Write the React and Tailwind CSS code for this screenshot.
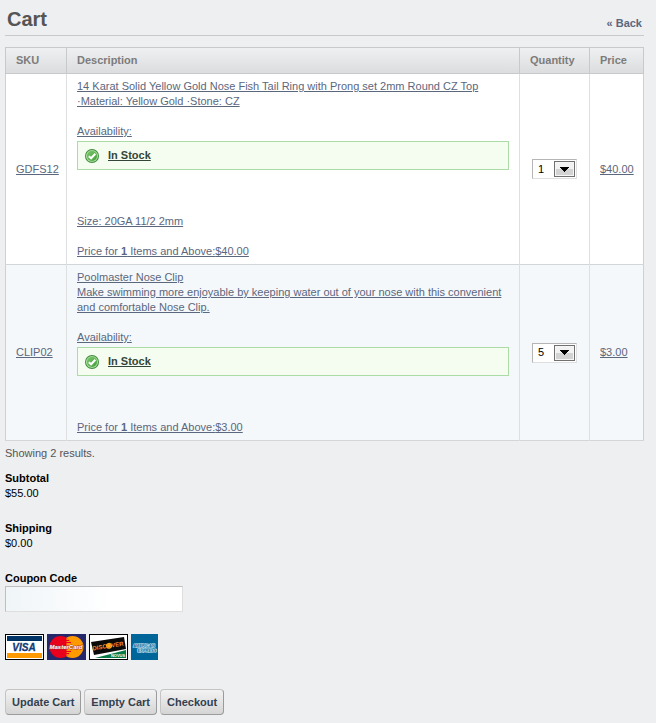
import React from "react";

const items = [
  {
    sku: "GDFS12",
    lines: [
      "14 Karat Solid Yellow Gold Nose Fish Tail Ring with Prong set 2mm Round CZ Top",
      "·Material: Yellow Gold ·Stone: CZ",
    ],
    size: "Size: 20GA 11/2 2mm",
    quantity: "1",
    price: "$40.00",
  },
  {
    sku: "CLIP02",
    lines: [
      "Poolmaster Nose Clip",
      "Make swimming more enjoyable by keeping water out of your nose with this convenient and comfortable Nose Clip.",
    ],
    quantity: "5",
    price: "$3.00",
  },
];

const linkClass = "text-[#5b677d] underline";

function CheckIcon() {
  return (
    <svg className="h-4 w-4 shrink-0" viewBox="0 0 16 16" aria-hidden="true">
      <defs>
        <linearGradient id="green" x1="0" y1="0" x2="1" y2="1">
          <stop offset="0" stopColor="#7cc56b" />
          <stop offset="1" stopColor="#43a03a" />
        </linearGradient>
      </defs>
      <circle cx="8" cy="8" r="7" fill="#3f8a3c" />
      <circle cx="8" cy="8" r="6.1" fill="#a4dc98" />
      <circle cx="8" cy="8" r="5" fill="url(#green)" />
      <path d="M4.8 8.2 7.1 10.3 11.3 5.8" fill="none" stroke="#fff" strokeWidth="2" />
    </svg>
  );
}

function QuantitySelect({ sku, value }) {
  return (
    <div className="relative h-5 w-[45px]">
      <select
        aria-label={`Quantity of ${sku}`}
        defaultValue={value}
        className="block h-5 w-full appearance-none border border-[#dfdfdf] border-t-[#b5b5b5] border-l-[#b5b5b5] bg-white pl-[5px] text-[11px] text-black"
      >
        {["1", "2", "3", "4", "5"].map((n) => (
          <option key={n}>{n}</option>
        ))}
      </select>
      <span className="pointer-events-none absolute top-0.5 right-0.5 flex h-4 w-[21px] items-center justify-center border border-[#707070] bg-linear-to-b from-[#f2f2f2] from-50% to-[#d3d3d3] to-50% outline -outline-offset-2 outline-[#f6f6f6]">
        <svg className="h-[5px] w-[9px]" viewBox="0 0 9 5" shapeRendering="crispEdges">
          <path d="M0 0h9v1H8v1H7v1H6v1H5v1H4V4H3V3H2V2H1V1H0z" fill="#000" />
        </svg>
      </span>
    </div>
  );
}

function Visa() {
  return (
    <svg width="39" height="26" viewBox="0 0 39 26" role="img" aria-label="Visa">
      <rect width="39" height="26" fill="#000" />
      <rect x="1" y="1" width="37" height="24" fill="#fff" />
      <rect x="2" y="2" width="35" height="5" fill="#003366" />
      <rect x="2" y="19" width="35" height="5" fill="#ff9900" />
      <text x="19" y="17" textAnchor="middle" fontSize="10" fontWeight="700" fontStyle="italic" fill="#123a78" stroke="#123a78" strokeWidth="0.3">VISA</text>
    </svg>
  );
}

function MasterCard() {
  return (
    <svg width="39" height="26" viewBox="0 0 39 26" role="img" aria-label="MasterCard">
      <rect width="39" height="26" fill="#24286b" />
      <circle cx="25.5" cy="13" r="11" fill="#ff9900" />
      <circle cx="13.5" cy="13" r="11" fill="#e8001c" />
      <path d="M19.5 3.8a11 11 0 0 1 0 18.4z" fill="#ff9900" />
      <path d="M18 6.500h4M18 8.500h6M18 17.500h6M18 19.500h4" stroke="#e8001c" />
      <text x="19" y="15" textAnchor="middle" fontSize="6" fontWeight="700" fontStyle="italic" fill="#fff" stroke="#a3303c" strokeWidth="0.8" paintOrder="stroke">MasterCard</text>
    </svg>
  );
}

function Discover() {
  return (
    <svg width="39" height="26" viewBox="0 0 39 26" role="img" aria-label="Discover Novus">
      <rect width="39" height="26" fill="#000" />
      <rect x="1" y="1" width="37" height="24" fill="#fff" />
      <path d="M6 24 37 16v8z" fill="#087a43" />
      <path d="M2 8 35 3l2 12L5 21z" fill="#0b0b0b" />
      <g transform="rotate(-9 19 12)">
        <circle cx="20" cy="12" r="3" fill="#ffb515" />
        <text x="19" y="14" textAnchor="middle" fontSize="6" fontWeight="700" fill="#f58a33">DISCOVER</text>
      </g>
      <text x="29" y="23" textAnchor="middle" fontSize="4" fontWeight="700" fill="#fff">NOVUS</text>
    </svg>
  );
}

function Amex() {
  return (
    <svg width="27" height="26" viewBox="0 0 27 26" role="img" aria-label="American Express">
      <rect width="27" height="26" fill="#006699" />
      <g fontSize="4" fontWeight="700" fill="#0a6c9c" stroke="#cfe9f2" strokeWidth="1.2" paintOrder="stroke">
        <text x="13" y="13" textAnchor="middle">AMERICAN</text>
        <text x="16" y="18" textAnchor="middle">EXPRESS</text>
      </g>
    </svg>
  );
}

function ActionButton({ children }) {
  return (
    <button
      type="button"
      className="h-[26px] rounded border border-[#c4c4c4] border-r-[#9b9b9b] border-b-[#9b9b9b] bg-linear-to-b from-[#f3f3f3] to-[#d5d5d5] px-1.5 font-bold text-[#34404f]"
    >
      {children}
    </button>
  );
}

export default function App() {
  return (
    <main className="min-h-screen bg-[#eeeff1] pr-3 pb-2 pl-[5px] font-['Liberation_Sans',Arial,sans-serif] text-[11px] leading-[15px] text-black">
      <header className="flex h-9 items-end justify-between border-b border-[#c8c9ca] px-0.5">
        <h1 className="pb-1 text-[20px] leading-6 font-bold text-[#555]">Cart</h1>
        <a href="#back" className="pb-1 font-bold text-[#5b677d]">« Back</a>
      </header>

      <table className="mt-[11px] w-full table-fixed border-collapse border border-[#cfd0d1] text-left">
        <colgroup>
          <col className="w-[61px]" />
          <col />
          <col className="w-[70px]" />
          <col className="w-[54px]" />
        </colgroup>
        <thead>
          <tr className="h-[26px] bg-linear-to-b from-[#eff0f1] to-[#dbdcdd] text-[#7c7c7c]">
            {["SKU", "Description", "Quantity", "Price"].map((h) => (
              <th key={h} scope="col" className="border border-[#c8c9ca] px-2.5 py-0 font-bold">{h}</th>
            ))}
          </tr>
        </thead>
        <tbody>
          {items.map((item) => (
            <tr key={item.sku} className="border-b border-[#d4d5d6] bg-white even:bg-[#f4f8fb]">
              <td className="border-r border-[#dedfe0] px-2.5">
                <a href="#item" className={linkClass}>{item.sku}</a>
              </td>
              <td className="border-r border-[#dedfe0] px-2.5 py-[5px]">
                <a href="#item" className={linkClass}>
                  {item.lines.map((line) => (
                    <span key={line} className="block">{line}</span>
                  ))}
                  <span className="mt-[15px] block">Availability:</span>
                </a>
                <div className="mt-0.5 mb-[44px] flex h-[29px] items-center gap-2 border border-[#acdca6] bg-[#f4fdf0] pl-1.5">
                  <CheckIcon />
                  <a href="#item" className="font-bold text-[#34463a] underline">In Stock</a>
                </div>
                <a href="#item" className={linkClass}>
                  {item.size && <span className="mb-[15px] block">{item.size}</span>}
                  <span className="block">
                    Price for <b>1</b> Items and Above:{item.price}
                  </span>
                </a>
              </td>
              <td className="border-r border-[#dedfe0] px-3">
                <QuantitySelect sku={item.sku} value={item.quantity} />
              </td>
              <td className="px-2.5">
                <a href="#item" className={linkClass}>{item.price}</a>
              </td>
            </tr>
          ))}
        </tbody>
      </table>

      <p className="mt-[5px] text-[#555]">Showing 2 results.</p>

      <dl className="mt-2.5">
        <dt className="font-bold">Subtotal</dt>
        <dd>$55.00</dd>
        <dt className="mt-5 font-bold">Shipping</dt>
        <dd>$0.00</dd>
      </dl>

      <form onSubmit={(e) => e.preventDefault()}>
        <label htmlFor="coupon" className="mt-5 block font-bold">Coupon Code</label>
        <input
          id="coupon"
          type="text"
          className="block h-[26px] w-[178px] border border-[#dedede] border-t-[#bfbfbf] border-l-[#bfbfbf] bg-white bg-linear-to-r from-[#f0f5f8] to-white to-60% px-1"
        />
        <div className="mt-[22px] flex gap-[3px]">
          <Visa />
          <MasterCard />
          <Discover />
          <Amex />
        </div>
        <div className="mt-[29px] flex gap-[3px]">
          <ActionButton>Update Cart</ActionButton>
          <ActionButton>Empty Cart</ActionButton>
          <ActionButton>Checkout</ActionButton>
        </div>
      </form>
    </main>
  );
}
